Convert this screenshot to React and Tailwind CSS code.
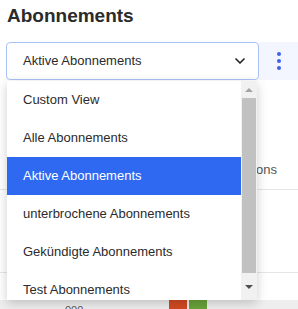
import { ChevronDown } from "lucide-react";

const options = [
  "Custom View",
  "Alle Abonnements",
  "Aktive Abonnements",
  "unterbrochene Abonnements",
  "Gekündigte Abonnements",
  "Test Abonnements",
];

function App() {
  const selected = "Aktive Abonnements";

  return (
    <div className="relative h-[309px] w-[298px] overflow-hidden bg-white font-['Liberation_Sans',Arial,sans-serif] text-[#333]">
      {/* Page heading */}
      <h1 className="px-[7px] pt-[3px] text-[19px] font-bold leading-[26px] text-[#2b2b2b]">
        Abonnements
      </h1>

      {/* Select + menu button */}
      <div className="mt-[13px] flex h-[38px] pl-[6px]">
        <div className="flex w-[253px] items-center justify-between rounded-[4px] border border-[#a9c2f6] bg-white pl-[16px] pr-[10px]">
          <span className="text-[13px] text-[#2b2b2b]">{selected}</span>
          <ChevronDown className="h-4 w-4 text-[#222]" strokeWidth={2.5} />
        </div>
        <button className="flex flex-1 flex-col items-center justify-center gap-[3px] bg-[#f3f6fe]">
          <span className="h-[4px] w-[4px] rounded-full bg-[#3f5ff0]" />
          <span className="h-[4px] w-[4px] rounded-full bg-[#3f5ff0]" />
          <span className="h-[4px] w-[4px] rounded-full bg-[#3f5ff0]" />
        </button>
      </div>

      {/* Table behind the dropdown */}
      <div className="mt-[71px]">
        <div className="flex h-[39px] items-center justify-end border-b border-[#e6e6e6] pr-[21px] text-[13px] text-[#555]">
          <span>Actions</span>
        </div>
        <div className="h-[83px] border-b border-[#e6e6e6]" />
        <div className="h-[27px]" />
        <div className="flex h-[12px] items-start bg-[#eeeeee] pl-[65px]">
          <span className="mt-[3px] text-[11px] leading-[14px] text-[#555]">000</span>
          <span className="ml-[86px] h-[9px] w-[18px] bg-[#d24a22]" />
          <span className="ml-[2px] h-[9px] w-[18px] bg-[#6aa33a]" />
        </div>
      </div>

      {/* Open dropdown list */}
      <div className="absolute left-[7px] top-[81px] flex h-[219px] w-[250px] bg-white shadow-[0_3px_10px_rgba(0,0,0,0.2)]">
        <ul className="flex-1 overflow-hidden">
          {options.map((o) => (
            <li
              key={o}
              className={`flex h-[38px] items-center pl-[16px] text-[13px] ${
                o === selected ? "bg-[#2f69f2] text-white" : "text-[#2b2b2b]"
              }`}
            >
              {o}
            </li>
          ))}
        </ul>
        <div className="flex w-[16px] flex-col bg-[#f1f1f1]">
          <div className="flex h-[17px] items-center justify-center">
            <span className="h-0 w-0 border-x-[4px] border-b-[4px] border-x-transparent border-b-[#a3a3a3]" />
          </div>
          <div className="mx-[1px] h-[175px] bg-[#c1c1c1]" />
          <div className="flex flex-1 items-center justify-center">
            <span className="h-0 w-0 border-x-[4px] border-t-[4px] border-x-transparent border-t-[#505050]" />
          </div>
        </div>
      </div>
    </div>
  );
}

export default App;
